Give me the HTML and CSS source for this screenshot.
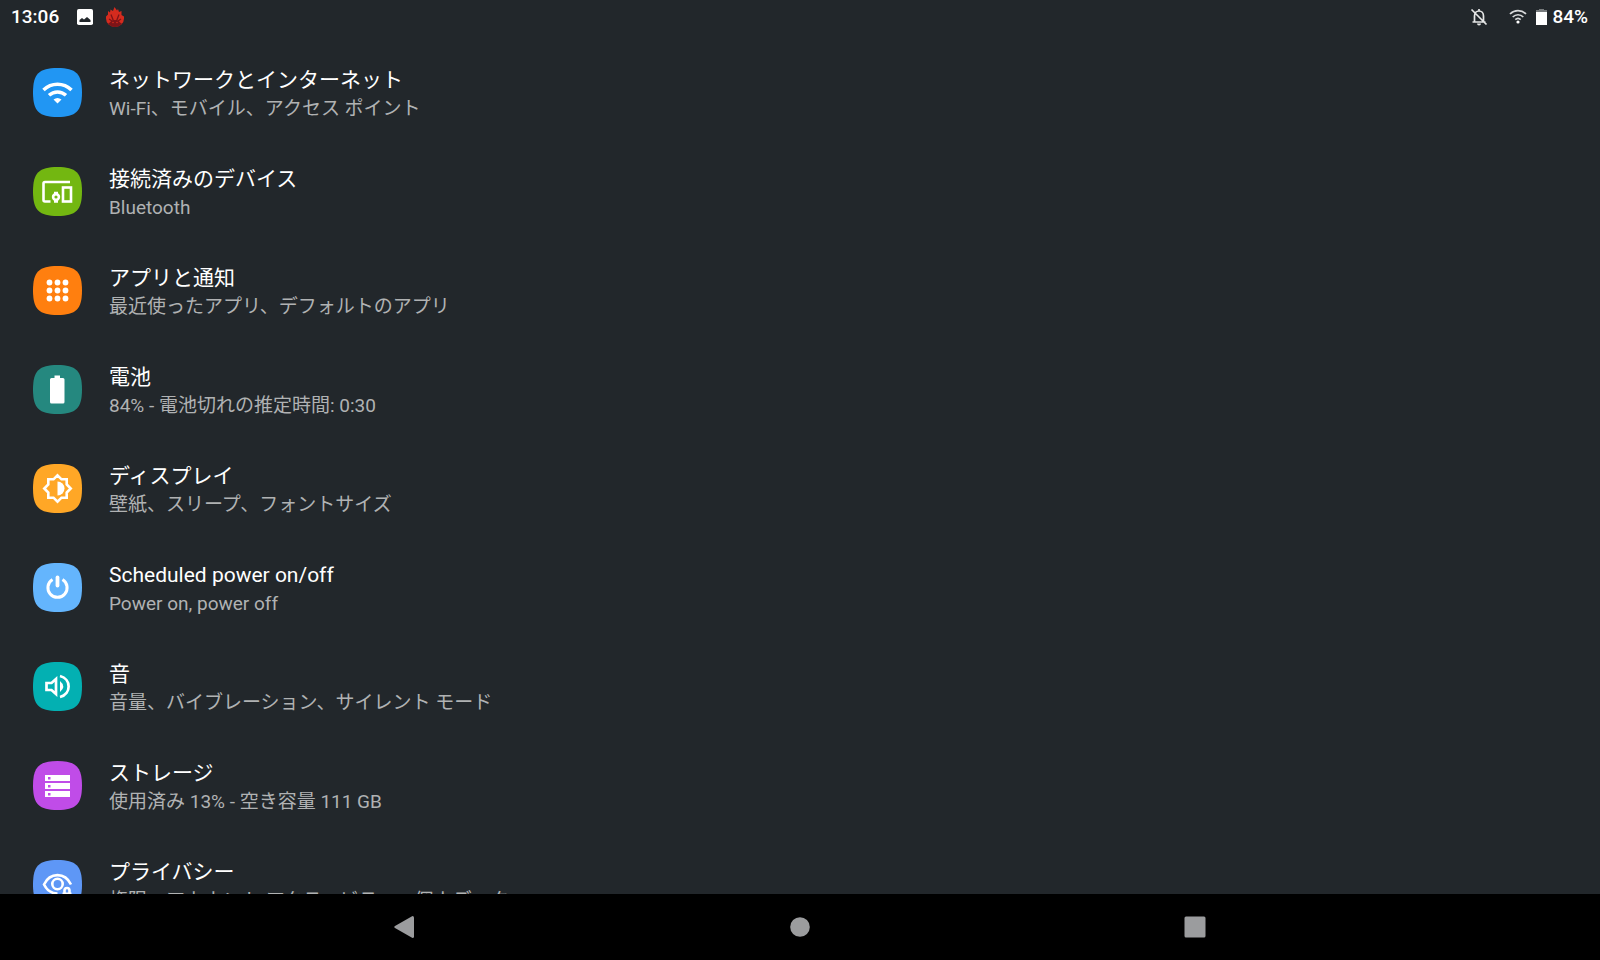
FILE: index.html
```html
<!DOCTYPE html>
<html lang="ja">
<head>
<meta charset="utf-8">
<title>設定</title>
<link rel="stylesheet" href="styles.css">
</head>
<body>
<div class="screen">
  <header class="status">
    <div class="status-group">
      <time class="clock">13:06</time>
      <svg class="status-icon picture" viewBox="0 0 16 16"><rect width="16" height="16" rx="1.800" fill="#fff"/><path fill="#22272b" d="M2.500 13v-2l2.500-2 2 1.500L10 8l3.500 3v2z"/></svg>
      <svg class="status-icon flame" viewBox="0 0 18 20"><path fill="#d52b1e" d="M8.500 0l2.500 3.500L12 2l1 3 2.500-1v4L18 9.500v2a9 8.500 0 0 1-18 0V9.500l2-2V4l2 1.500.5-3L7 4z"/><path fill="#7d1418" d="M2 16.500c2.500-.5 2.500-3.500 7-3.500s4.500 3 7 3.500C14 19 12 20 9 20s-5-1-7-3.500z"/><path fill="none" stroke="#7d1418" stroke-width="1.300" d="M7.500 14L5 7.500M10.500 14L13 7.500M3 12l3 2M15 12l-3 2"/><circle cx="7" cy="15.500" r=".8" fill="#d52b1e"/><circle cx="11" cy="15.500" r=".8" fill="#d52b1e"/></svg>
    </div>
    <div class="status-group">
      <svg class="status-icon bell" viewBox="0 0 18 18" fill="none" stroke="#e6e7e7" stroke-width="1.700"><path d="M4.500 14V8c0-3 2-5 4.500-5s4.500 2 4.500 5v6M2.500 14h13M9 1v2M1.500 1.500l15 15"/><path fill="#e6e7e7" stroke="none" d="M7 15.500h4a2 2 0 0 1-4 0z"/></svg>
      <svg class="status-icon wifi" viewBox="0 0 18 15" fill="none" stroke="#d8dadb" stroke-width="1.700"><path d="M1 5c4.500-4.500 11.500-4.500 16 0M3.700 8c3-3 7.600-3 10.600 0M6.300 10.700c1.600-1.500 3.800-1.500 5.400 0"/><circle cx="9" cy="13" r="1.600" fill="#fff" stroke="none"/></svg>
      <svg class="status-icon battery" viewBox="0 0 11 16"><path fill="#777b7d" d="M3 0h5v1h3v3H0V1h3z"/><path fill="#fff" d="M0 3h11v13H0z"/></svg>
      <span class="percent">84%</span>
    </div>
  </header>

  <main class="settings">
    <a class="row" href="#network">
      <span class="tile blue"><svg class="glyph" viewBox="0 0 49 49"><g fill="none" stroke="#fff" stroke-width="3.500"><path d="M10.500 22c8-7.800 20-7.800 28 0M16 27.300c5-4.500 12-4.500 17 0"/></g><path fill="#fff" d="M20.500 31.500q4-3 8 0l-4 4z"/></svg></span>
      <span class="text"><span class="title">ネットワークとインターネット</span><span class="summary">Wi-Fi、モバイル、アクセス ポイント</span></span>
    </a>
    <a class="row" href="#devices">
      <span class="tile green"><svg class="glyph" viewBox="0 0 49 49" fill="none" stroke="#fff" stroke-width="2.600"><path d="M37 15H12q-1.500 0-1.500 1.500V33q0 1.500 1.500 1.500h5.500"/><rect x="30" y="20.500" width="8" height="14"/><circle cx="23" cy="30" r="2.900"/><path d="M21 26h4M21 34.500h4"/></svg></span>
      <span class="text"><span class="title">接続済みのデバイス</span><span class="summary">Bluetooth</span></span>
    </a>
    <a class="row" href="#apps">
      <span class="tile orange"><svg class="glyph" viewBox="0 0 49 49" fill="#fff"><circle cx="16.500" cy="16.500" r="2.900"/><circle cx="24.500" cy="16.500" r="2.900"/><circle cx="32.500" cy="16.500" r="2.900"/><circle cx="16.500" cy="24.500" r="2.900"/><circle cx="24.500" cy="24.500" r="2.900"/><circle cx="32.500" cy="24.500" r="2.900"/><circle cx="16.500" cy="32.500" r="2.900"/><circle cx="24.500" cy="32.500" r="2.900"/><circle cx="32.500" cy="32.500" r="2.900"/></svg></span>
      <span class="text"><span class="title">アプリと通知</span><span class="summary">最近使ったアプリ、デフォルトのアプリ</span></span>
    </a>
    <a class="row" href="#battery">
      <span class="tile teal"><svg class="glyph" viewBox="0 0 49 49"><path fill="#fff" d="M21.500 10.500h5.500V13h3q1.500 0 1.500 1.500V37q0 1.500-1.500 1.500H18.500Q17 38.500 17 37V14.500q0-1.500 1.500-1.500h3z"/></svg></span>
      <span class="text"><span class="title">電池</span><span class="summary">84% - 電池切れの推定時間: 0:30</span></span>
    </a>
    <a class="row" href="#display">
      <span class="tile amber"><svg class="glyph" viewBox="0 0 49 49"><path fill="none" stroke="#fff" stroke-width="2.600" d="M24.500 11.300l4 4h5.200v5.200l4 4-4 4v5.200h-5.200l-4 4-4-4h-5.200v-5.200l-4-4 4-4v-5.200h5.200z"/><path fill="#fff" d="M24.500 17.500a7 7 0 0 1 0 14z"/></svg></span>
      <span class="text"><span class="title">ディスプレイ</span><span class="summary">壁紙、スリープ、フォントサイズ</span></span>
    </a>
    <a class="row" href="#power">
      <span class="tile sky"><svg class="glyph" viewBox="0 0 49 49" fill="none" stroke="#fff"><path stroke-width="3" d="M19.500 16.500a9.600 9.600 0 1 0 10 0"/><path stroke-width="3.800" stroke-linecap="round" d="M24.500 14.500v8"/></svg></span>
      <span class="text"><span class="title">Scheduled power on/off</span><span class="summary">Power on, power off</span></span>
    </a>
    <a class="row" href="#sound">
      <span class="tile cyan"><svg class="glyph" viewBox="0 0 49 49"><g fill="none" stroke="#fff" stroke-width="2.700"><path d="M13.500 21h5l4.500-4v15l-4.500-4h-5z"/><path d="M27 14c11.500 3 11.500 18 0 21"/></g><path fill="#fff" d="M27 19q6.500 5.500 0 11z"/></svg></span>
      <span class="text"><span class="title">音</span><span class="summary">音量、バイブレーション、サイレント モード</span></span>
    </a>
    <a class="row" href="#storage">
      <span class="tile purple"><svg class="glyph" viewBox="0 0 49 49"><path fill="#fff" d="M12 14h25v6H12zM12 22h25v6H12zM12 30h25v6H12z"/><path fill="#c04ce8" d="M15 16h2.500v2.500H15zM15 24h2.500v2.500H15zM15 32h2.500v2.500H15z"/></svg></span>
      <span class="text"><span class="title">ストレージ</span><span class="summary">使用済み 13% - 空き容量 111 GB</span></span>
    </a>
    <a class="row" href="#privacy">
      <span class="tile periwinkle"><svg class="glyph" viewBox="0 0 49 49" fill="none" stroke="#fff" stroke-width="2.600"><path d="M38 24.500C32 12 17 12 11 24.500c3 6 7.500 9 13.500 9"/><circle cx="24.500" cy="24" r="5.200"/><path d="M31.500 33v-2.500a2.500 2.500 0 0 1 5 0V33"/><path fill="#fff" stroke="none" d="M29.500 32.500h9V39h-9z"/></svg></span>
      <span class="text"><span class="title">プライバシー</span><span class="summary">権限、アカウント アクティビティ、個人データ</span></span>
    </a>
  </main>

  <nav class="navbar">
    <button class="nav-button" aria-label="戻る"><svg class="nav-icon" viewBox="0 0 22 22"><path fill="#9b9c9e" d="M18.500 0Q20 0 20 1.500v19q0 1.500-1.500 1.500L1 12q-1.500-1 0-2z"/></svg></button>
    <button class="nav-button" aria-label="ホーム"><svg class="nav-icon" viewBox="0 0 22 22"><circle cx="11" cy="11" r="9.800" fill="#9b9c9e"/></svg></button>
    <button class="nav-button" aria-label="履歴"><svg class="nav-icon" viewBox="0 0 22 22"><rect x=".5" y=".5" width="21" height="21" rx="1.500" fill="#9b9c9e"/></svg></button>
  </nav>
</div>
</body>
</html>
```
FILE: styles.css
```css
* { box-sizing: border-box; }

body {
  margin: 0;
  background: #22272b;
  color: #fff;
  font-family: Roboto, "Noto Sans CJK JP", sans-serif;
}

.screen {
  display: flex;
  flex-direction: column;
  height: 100vh;
}

.status {
  display: flex;
  justify-content: space-between;
  align-items: center;
  flex: none;
  height: 33px;
  padding: 0 12px 0 11px;
  font-size: 19px;
  font-weight: 500;
}

.status-group {
  display: flex;
  align-items: center;
}

.status-icon { display: block; flex: none; }
.picture { width: 16px; height: 16px; margin-left: 18px; }
.flame { width: 18px; height: 20px; margin-left: 13px; }
.bell { width: 18px; height: 18px; }
.wifi { width: 18px; height: 15px; margin-left: 21px; }
.battery { width: 11px; height: 16px; margin: 0 5px 0 9px; }

.settings {
  flex: 1;
  min-height: 0;
  overflow: hidden;
  padding-top: 10px;
}

.row {
  display: flex;
  align-items: center;
  gap: 27px;
  height: 99px;
  padding-left: 33px;
  color: inherit;
  text-decoration: none;
}

.tile {
  flex: none;
  width: 49px;
  height: 49px;
  clip-path: path("M24.500 0C43 0 49 6 49 24.500S43 49 24.500 49 0 43 0 24.500 6 0 24.500 0z");
}

.glyph { display: block; width: 100%; height: 100%; }

.blue { background: #2196f3; }
.green { background: #73b711; }
.orange { background: #ff7f0f; }
.teal { background: #25887f; }
.amber { background: #ffa726; }
.sky { background: #64b5fd; }
.cyan { background: #03b0b2; }
.purple { background: #c04ce8; }
.periwinkle { background: #5e97f6; }

.text { display: block; padding-top: 5px; }
.title, .summary { display: block; white-space: nowrap; }
.title { font-size: 21px; line-height: 28px; }
.summary { font-size: 19px; line-height: 30px; color: #b0b2b3; }

.navbar {
  display: flex;
  justify-content: center;
  flex: none;
  height: 66px;
  background: #000;
}

.nav-button {
  display: flex;
  justify-content: center;
  align-items: center;
  width: 24.67%;
  padding: 0;
  border: 0;
  background: none;
}

.nav-icon { display: block; width: 22px; height: 22px; }
```
